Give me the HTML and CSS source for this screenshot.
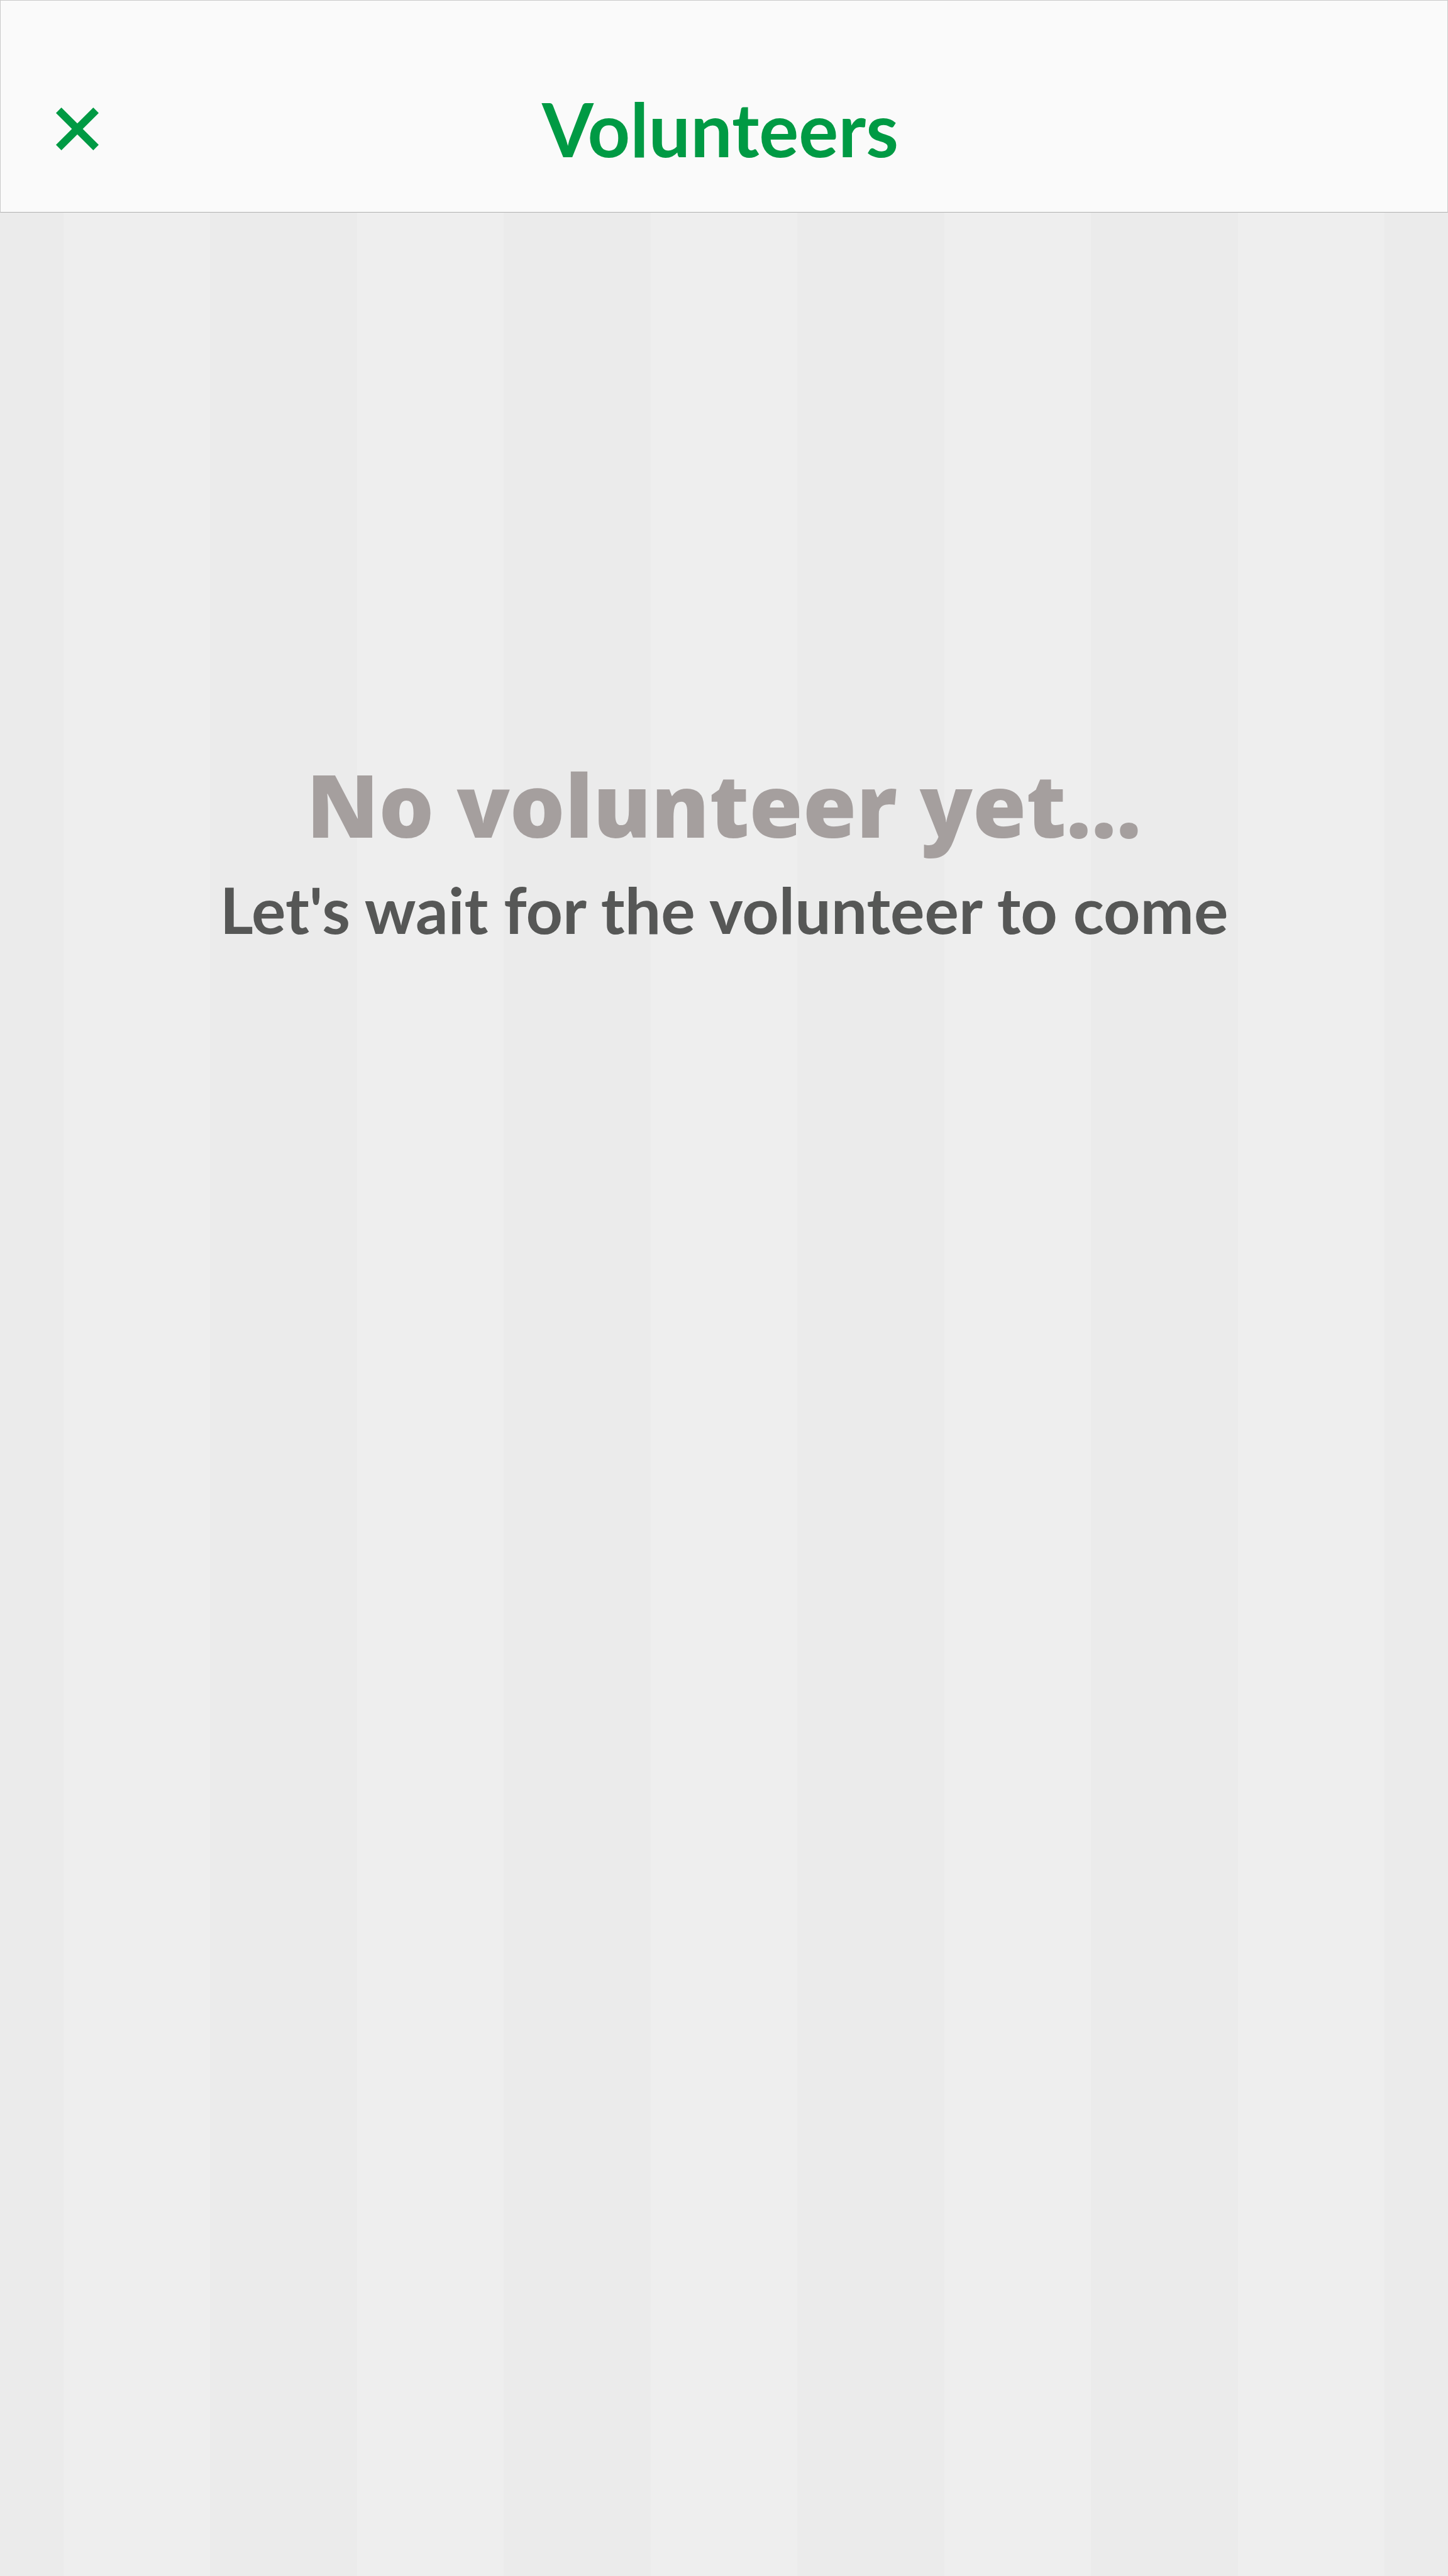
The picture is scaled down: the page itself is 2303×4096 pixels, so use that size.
FILE: index.html
```html
<!DOCTYPE html>
<html lang="en">
<head>
  <meta charset="utf-8">
  <meta name="viewport" content="width=device-width, initial-scale=1">
  <title>Volunteers</title>
  <link rel="stylesheet" href="styles.css">
</head>
<body>
  <div class="screen">
    <header class="navbar">
      <button class="close" type="button" aria-label="Close">
        <svg class="close-icon" viewBox="0 0 93 93" aria-hidden="true">
          <path d="M11.8 0 46.5 34.7 81.2 0 93 11.8 58.3 46.5 93 81.2 81.2 93 46.5 58.3 11.8 93 0 81.2 34.7 46.5 0 11.8Z" fill="currentColor"/>
        </svg>
      </button>
      <h1 class="title">Volunteers</h1>
    </header>
    <main class="empty">
      <h2 class="empty-title">No volunteer yet...</h2>
      <p class="empty-text">Let's wait for the volunteer to come</p>
    </main>
  </div>
</body>
</html>
```

FILE: styles.css
```css
* {
  box-sizing: border-box;
}

body {
  margin: 0;
  font-family: "Avenir Next", Lato, sans-serif;
}

.screen {
  display: flex;
  flex-direction: column;
  min-height: 100vh;
}

.navbar {
  display: grid;
  grid-template-columns: auto 1fr 160px;
  padding: 130px 48px 58px;
  border: 1px solid #cacaca;
  border-bottom-color: #b0b1b0;
  box-shadow: 0 1px #d2d2d2;
  background: #fafafa;
  color: #009a44;
}

.close {
  display: flex;
  padding: 40px;
  border: 0;
  background: none;
  color: inherit;
  cursor: pointer;
}

.close-icon {
  width: 68px;
  height: 68px;
}

.title {
  margin: 0;
  font-size: 118px;
  font-weight: 700;
  line-height: 148px;
  text-align: center;
}

.empty {
  flex: 1;
  padding: 844px 48px 48px;
  background: linear-gradient(to right, #ebebeb 25%, #eeeeee 25% 75%, #ebebeb 75%) top center / 467px 100% repeat-x;
  text-align: center;
}

.empty-title {
  margin: 0;
  color: #a59f9e;
  font-family: "Avenir Next", "Open Sans", sans-serif;
  font-size: 138px;
  font-weight: 800;
  line-height: 192px;
}

.empty-text {
  margin: 0;
  color: #565756;
  font-size: 102px;
  font-weight: 700;
  line-height: 144px;
}
```
